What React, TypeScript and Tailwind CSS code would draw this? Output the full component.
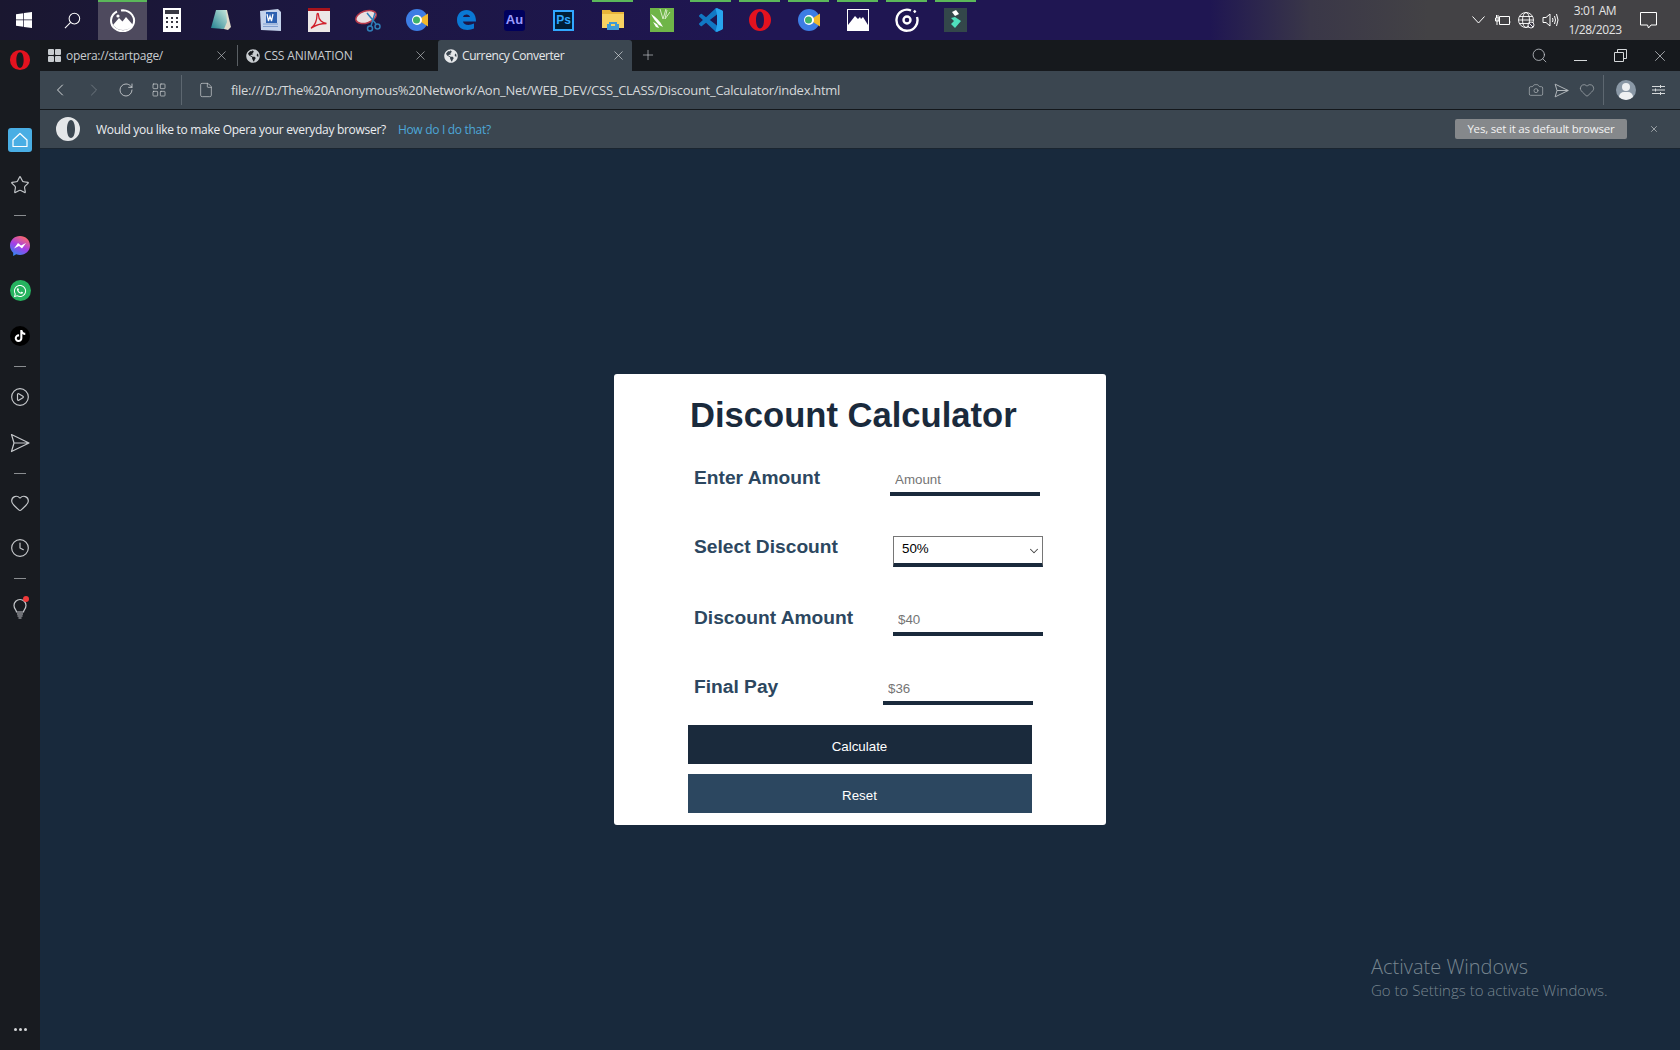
import { Camera, ChevronDown, ChevronLeft, ChevronRight, CirclePlay, Clock, File, Heart, LayoutGrid, Plus, RotateCw, Search, Star, X } from 'lucide-react';
import { FaGlobeAmericas, FaTiktok, FaWhatsapp } from 'react-icons/fa';
import type { ReactNode } from 'react';

const ui = "font-['Open_Sans',sans-serif]";
const form = "font-['Liberation_Sans',Arial,sans-serif]";

function Slot({ on, active, children }: { on?: boolean; active?: boolean; children: ReactNode }) {
    return (
        <div className={active ? 'relative h-10 w-[49px] flex items-center justify-center bg-[#4e4a5e]' : 'relative h-10 w-[49px] flex items-center justify-center'}>
            {on && <div className={active ? 'absolute top-0 inset-x-0 h-[2px] bg-[#5bb85a]' : 'absolute top-0 inset-x-[4px] h-[2px] bg-[#5bb85a]'} />}
            {children}
        </div>
    );
}

function Taskbar() {
    return (
        <div className="h-10 shrink-0 flex items-center bg-[linear-gradient(90deg,#1a1730_0%,#1c1742_20%,#1f1652_45%,#1f1652_72%,#3a3748_78%,#434245_85%,#434245_100%)]">
            <Slot>
                <svg className="mr-px" width="16" height="16" viewBox="0 0 16 16" fill="#fff"><path d="M0 2.3 7.3 1.2V7.6H0ZM8 1.1 16 0V7.6H8ZM0 8.3H7.3V14.8L0 13.7ZM8 8.3H16V16L8 14.9Z" /></svg>
            </Slot>
            <Slot>
                <svg className="mr-[2px]" width="17" height="17" viewBox="0 0 18 18" fill="none" stroke="#fff" strokeWidth="1.1"><circle cx="11" cy="7" r="5.6" /><path d="M7 11 1 17" /></svg>
            </Slot>
            <Slot on active>
                <svg width="26" height="24" viewBox="0 0 26 24" fill="none"><path d="M7 3.5A11.5 10.5 0 1 0 13 2.2a12 12 0 0 0-2 .2" stroke="#fff" strokeWidth="2" /><path d="M3 17 9 10l3.5 3.5L16 9l7 8q-3.5 5-10 5T3 17Z" fill="#fff" /><circle cx="8" cy="8" r="1.6" fill="#fff" /></svg>
            </Slot>
            <Slot>
                <svg width="18" height="24" viewBox="0 0 18 24"><rect width="18" height="24" fill="#fff" /><rect x="2" y="2" width="14" height="4" fill="#3a3a44" /><path d="M3 9h2v2H3zM8 9h2v2H8zM13 9h2v2h-2zM3 13h2v2H3zM8 13h2v2H8zM13 13h2v2h-2zM3 18h2v2H3zM8 18h2v2H8zM13 18h2v2h-2z" fill="#3a3a44" /></svg>
            </Slot>
            <Slot>
                <svg width="24" height="24" viewBox="0 0 24 24"><defs><linearGradient id="note" x1="0" y1="1" x2="1" y2="0"><stop offset="0" stopColor="#1f7f8f" /><stop offset="1" stopColor="#c8e8dc" /></linearGradient></defs><path d="M8 2h10l4 17-3 3-8-2Z" fill="#e0dccb" /><path d="M7 2h10l1 12-3 7-13-1Z" fill="url(#note)" /></svg>
            </Slot>
            <Slot>
                <svg width="24" height="24" viewBox="0 0 24 24"><path d="M2 3 20 1l3 3v19l-20-1Z" fill="#c4d3ec" /><path d="M8 4h11v11H8z" fill="#2b5fb0" /><path d="M9 6l1.5 7 1.5-5 1.5 5L15 6" stroke="#fff" strokeWidth="1.2" fill="none" /><path d="M5 16h15M5 18.500h15" stroke="#7f9ecf" /></svg>
            </Slot>
            <Slot>
                <svg width="22" height="24" viewBox="0 0 22 24"><rect width="22" height="24" fill="#ece7e6" /><rect width="22" height="3" fill="#a8141c" /><path d="M3 20c4-2 6-8 6-13 0-2 1.500-2 1.500 0 0 5 4 8 8 8.500-4 0-10 1-15 4.500Z" fill="none" stroke="#d0202c" strokeWidth="1.3" /></svg>
            </Slot>
            <Slot>
                <svg width="26" height="24" viewBox="0 0 26 24" fill="none"><ellipse cx="11" cy="9" rx="10.500" ry="6" transform="rotate(-18 11 9)" fill="#e9dfe0" stroke="#b8394a" strokeWidth="1.500" /><path d="M12 5l9 11M20 5 16 18" stroke="#2f7fb8" strokeWidth="1.500" /><circle cx="15" cy="20.500" r="2.500" stroke="#2f7fb8" strokeWidth="1.500" /><circle cx="22.500" cy="18.500" r="2.500" stroke="#2f7fb8" strokeWidth="1.500" /></svg>
            </Slot>
            <Slot>
                <ChromeIcon />
            </Slot>
            <Slot>
                <svg width="20" height="22" viewBox="0 0 20 22"><path d="M1 11C1 5 5 1 10.500 1 16 1 20 5 20 12.500H7c.5 3.500 6 4.500 11 2v5C12 22.500 1 21.500 1 11Zm6-3h7c-.3-3-6-3.500-7 0Z" fill="#0a78d4" /></svg>
            </Slot>
            <Slot>
                <div className={`w-[21px] h-[21px] rounded-[3px] bg-[#00005b] text-[#9a9aff] text-[13px] font-bold flex items-center justify-center ${form}`}>Au</div>
            </Slot>
            <Slot>
                <div className={`w-[21px] h-[21px] border-2 border-[#31a8ff] bg-[#001e36] text-[#31a8ff] text-[12px] font-bold flex items-center justify-center ${form}`}>Ps</div>
            </Slot>
            <Slot on>
                <svg width="22" height="20" viewBox="0 0 22 20"><path d="M0 0h8l2 2h12v4H0Z" fill="#e8b53a" /><path d="M0 4h22v14H0Z" fill="#f8d261" /><path d="M7 12h8v2h2v6H5v-6h2Z" fill="#3f9bd6" /><path d="M9 14h4v2H9z" fill="#f8d261" /></svg>
            </Slot>
            <Slot>
                <svg width="24" height="24" viewBox="0 0 24 24"><rect width="24" height="24" fill="#6fb548" /><path d="M1 6c5 3 9 7 12 13l-4-2C6 14 3 10 1 6Z" fill="#fff" /><path d="M3 14c3 1 5 3 6 6l-3-1Z" fill="#fff" /><path d="M10 1l3 10 3-10M17 2l-2 9 5-7" stroke="#d6ecc4" fill="none" /></svg>
            </Slot>
            <Slot on>
                <svg width="24" height="24" viewBox="0 0 24 24"><path d="M23.150 2.587 18.210.21a1.494 1.494 0 0 0-1.705.29l-9.460 8.630-4.120-3.128a.999.999 0 0 0-1.276.057L.327 7.261A1 1 0 0 0 .326 8.740L3.899 12 .326 15.260a1 1 0 0 0 .001 1.479L1.650 17.940a.999.999 0 0 0 1.276.057l4.120-3.128 9.460 8.630a1.492 1.492 0 0 0 1.704.29l4.942-2.377A1.500 1.500 0 0 0 24 20.060V3.939a1.500 1.500 0 0 0-.850-1.352zm-5.146 14.861L10.826 12l7.178-5.448v10.896z" fill="#1178c4" /><path d="M16.500.5 18.210.21l4.940 2.377A1.500 1.500 0 0 1 24 3.939V20.060a1.500 1.500 0 0 1-.850 1.352l-4.940 2.378-1.710-.290 1.504-6.052V6.552Z" fill="#28a4ee" /></svg>
            </Slot>
            <Slot on>
                <OperaLogo size={24} />
            </Slot>
            <Slot on>
                <ChromeIcon />
            </Slot>
            <Slot on>
                <svg width="22" height="22" viewBox="0 0 22 22"><rect x=".5" y=".5" width="21" height="21" fill="#1f1652" stroke="#fff" /><path d="M1 16 8 7l3 3 2-2 1 2 2-2 5 8v6H1Z" fill="#fff" /></svg>
            </Slot>
            <Slot on>
                <svg width="24" height="24" viewBox="0 0 24 24" fill="none"><path d="M16 2.500A10.500 10.500 0 1 0 22 9" stroke="#fff" strokeWidth="2.400" /><circle cx="12" cy="12" r="3.500" stroke="#fff" strokeWidth="2.400" /><path d="M19 2.500l1.500 2" stroke="#fff" strokeWidth="2.400" /></svg>
            </Slot>
            <Slot on>
                <svg width="23" height="24" viewBox="0 0 23 24"><rect width="23" height="24" fill="#33474a" /><path d="M8 4l4-2 3 4-4 2Z" fill="#fff" /><path d="M11 9l6 4-6 7-4-4 3-3-3-3Z" fill="#4fe0bd" /></svg>
            </Slot>
            <div className={`ml-auto flex items-center text-[#e4e4e4] ${ui}`}>
                <svg width="13" height="8" viewBox="0 0 13 8" fill="none" stroke="#fff"><path d="m.5.5 6 6.500 6-6.500" /></svg>
                <svg className="ml-[9px]" width="17" height="14" viewBox="0 0 17 14" fill="none" stroke="#fff"><path d="M5.500 3.500h10v8h-10zM15.500 6v3h1M1 7h4M2.500 2v3M4 2v3M1.500 5h3.500v3h-3.500zM3 8v4" /></svg>
                <svg className="ml-[7px]" width="17" height="17" viewBox="0 0 17 17" fill="none" stroke="#fff" strokeWidth=".9"><circle cx="8" cy="8" r="7.500" /><ellipse cx="8" cy="8" rx="3.500" ry="7.500" /><path d="M.5 8h15M1.500 4.500h13M1.500 11.500h13" /><circle cx="13" cy="13" r="3" fill="#3a3844" /><path d="m11 11 4 4" /></svg>
                <svg className="ml-[7px]" width="17" height="16" viewBox="0 0 17 16" fill="none" stroke="#fff"><path d="M1 5.500h3L8 2v12l-4-3.500H1ZM10.500 6q1 2 0 4M12.500 4q2 4 0 8M14.500 2q3 6 0 12" /></svg>
                <div className="ml-[6px] w-[60px] text-center text-[12px] leading-[19px] tracking-[-0.4px]">
                    <div>3:01 AM</div>
                    <div>1/28/2023</div>
                </div>
                <svg className="ml-[15px] mr-[23px]" width="17" height="17" viewBox="0 0 17 17" fill="none" stroke="#fff"><path d="M.5.5h16v12.500h-5.500L8.500 16l-1-3H.5Z" /></svg>
            </div>
        </div>
    );
}

function ChromeIcon() {
    return (
        <svg width="22" height="22" viewBox="0 0 22 22"><circle cx="11" cy="11" r="11" fill="#3d7de4" /><path d="M12 11 22 4.500v13Z" fill="#f2b92c" /><circle cx="11" cy="11" r="5" fill="#fff" /><circle cx="10.500" cy="11" r="3.500" fill="#3fb36b" /></svg>
    );
}

function OperaLogo({ size }: { size: number }) {
    return (
        <svg width={size} height={size} viewBox="0 0 24 24"><path fillRule="evenodd" d="M12 1a11 11 0 1 0 0 22 11 11 0 0 0 0-22Zm0 2.500c-2.500 0-4 3.800-4 8.500s1.500 8.500 4 8.500 4-3.800 4-8.500-1.500-8.500-4-8.500Z" fill="#e3121f" /></svg>
    );
}

function Sidebar() {
    return (
        <div className="w-10 shrink-0 bg-[#181b20] flex flex-col items-center text-[#c5c8cb]">
            <div className="mt-2 h-6 flex items-center"><OperaLogo size={22} /></div>
            <div className="mt-[56px] w-6 h-6 rounded-[3px] bg-[#49aee4] flex items-center justify-center">
                <svg width="16" height="16" viewBox="0 0 16 16" fill="none" stroke="#fff" strokeWidth="1.200"><path d="M8 1.500 15 8v6.500H1V8Z" strokeLinejoin="round" /></svg>
            </div>
            <Star className="mt-[23px]" size={20} strokeWidth={1.4} />
            <div className="mt-[20px] w-3 h-px bg-[#8a8d90]" />
            <svg className="mt-[20px]" width="20" height="20" viewBox="0 0 20 20"><defs><linearGradient id="msg" x1="0.7" y1="0" x2="0.2" y2="1"><stop offset="0" stopColor="#ff6a68" /><stop offset="0.5" stopColor="#a33ee8" /><stop offset="1" stopColor="#2a8bf2" /></linearGradient></defs><path d="M10 0C4.400 0 0 4.100 0 9.600c0 2.900 1.200 5.400 3.200 7.100V20l3-1.700c1.200.4 2.500.6 3.800.6 5.600 0 10-4 10-9.400S15.600 0 10 0Z" fill="url(#msg)" /><path d="m4 12.500 4-5.500 3 2.500L16 7l-4 5.500-3-2.500Z" fill="#fff" /></svg>
            <div className="mt-[24px] w-[21px] h-[21px] rounded-full bg-[#26b35f] flex items-center justify-center text-white"><FaWhatsapp size={14} /></div>
            <div className="mt-[25px] w-5 h-5 rounded-full bg-black flex items-center justify-center text-white"><FaTiktok size={12} /></div>
            <div className="mt-[20px] w-3 h-px bg-[#8a8d90]" />
            <CirclePlay className="mt-[20px]" size={20} strokeWidth={1.4} />
            <svg className="mt-[26px]" width="20" height="20" viewBox="0 0 20 20" fill="none" stroke="currentColor" strokeWidth="1.200"><path d="M1.500 1.500 19 10 1.500 18.500 4 10Z M4 10h15" strokeLinejoin="round" /></svg>
            <div className="mt-[20px] w-3 h-px bg-[#8a8d90]" />
            <Heart className="mt-[19px]" size={20} strokeWidth={1.4} />
            <Clock className="mt-[25px]" size={20} strokeWidth={1.4} />
            <div className="mt-[20px] w-3 h-px bg-[#8a8d90]" />
            <div className="relative mt-[19px]">
                <svg width="20" height="22" viewBox="0 0 20 22" fill="none" stroke="currentColor" strokeWidth="1.200"><path d="M6.500 14c0-2-2.500-3-2.500-6.500a6 6 0 0 1 12 0C16 11 13.500 12 13.500 14ZM7 16h6M7.500 18h5M8.500 20h3" /></svg>
                <div className="absolute -top-[2px] right-[1px] w-[6px] h-[6px] rounded-full bg-[#f03a3a]" />
            </div>
            <div className="mt-auto mb-[19px] flex gap-[2px]">
                <div className="w-[3px] h-[3px] rounded-full bg-[#d4d6d8]" />
                <div className="w-[3px] h-[3px] rounded-full bg-[#d4d6d8]" />
                <div className="w-[3px] h-[3px] rounded-full bg-[#d4d6d8]" />
            </div>
        </div>
    );
}

function TabBar() {
    return (
        <div className={`h-[31px] shrink-0 bg-[#16191d] flex text-[12px] tracking-[-0.3px] text-[#c8ccd0] ${ui}`}>
            <div className="w-[198px] pl-2 pr-[8px] flex items-center border-r border-[#5a5f64] my-[5px]">
                <div className="w-[13px] h-[13px] grid grid-cols-2 gap-px">
                    <div className="bg-[#c8ccd0] rounded-[1px]" />
                    <div className="bg-[#c8ccd0] rounded-[1px]" />
                    <div className="bg-[#c8ccd0] rounded-[1px]" />
                    <div className="bg-[#c8ccd0] rounded-[1px]" />
                </div>
                <span className="ml-[5px] pt-px">opera://startpage/</span>
                <X className="ml-auto" size={15} strokeWidth={1} />
            </div>
            <div className="w-[200px] pl-2 pr-[10px] flex items-center">
                <FaGlobeAmericas size={14} />
                <span className="ml-1 pt-px tracking-[-0.15px]">CSS ANIMATION</span>
                <X className="ml-auto" size={15} strokeWidth={1} />
            </div>
            <div className="w-[194px] pl-[6px] pr-[6px] flex items-center bg-[#3b4650] rounded-t-[3px] text-[#e6e8ea]">
                <FaGlobeAmericas size={14} />
                <span className="ml-1 pt-px tracking-[-0.4px]">Currency Converter</span>
                <X className="ml-auto" size={15} strokeWidth={1} />
            </div>
            <div className="ml-[8px] mb-px flex items-center"><Plus size={16} strokeWidth={1} /></div>
            <div className="ml-auto flex items-center">
                <Search size={17} strokeWidth={1.1} />
                <div className="ml-[26px] w-[13px] h-px bg-[#d5d8da] mt-[10px]" />
                <svg className="ml-[27px]" width="13" height="13" viewBox="0 0 13 13" fill="none" stroke="#d5d8da"><path d="M.5 3.500h9v9h-9zM3.500 3.500v-3h9v9h-3" /></svg>
                <X className="ml-[24px] mr-[11px]" size={18} strokeWidth={1} />
            </div>
        </div>
    );
}

function Toolbar() {
    return (
        <div className={`h-[39px] shrink-0 bg-[#3b4650] border-b border-[#14181c] flex items-center text-[#d5d8da] ${ui}`}>
            <ChevronLeft className="ml-[10px]" size={20} strokeWidth={1.2} />
            <ChevronRight className="ml-[14px] text-[#6d767e]" size={20} strokeWidth={1.2} />
            <RotateCw className="ml-[14px]" size={16} strokeWidth={1.2} />
            <LayoutGrid className="ml-[17px]" size={16} strokeWidth={1} />
            <div className="ml-[14px] w-px h-[30px] bg-[#5d6770]" />
            <File className="ml-[16px]" size={16} strokeWidth={1} />
            <span className="ml-[17px] pt-px text-[13px] tracking-[-0.28px]">file:///D:/The%20Anonymous%20Network/Aon_Net/WEB_DEV/CSS_CLASS/Discount_Calculator/index.html</span>
            <div className="ml-auto flex items-center text-[#b4b9bd]">
                <Camera size={16} strokeWidth={1} />
                <svg className="ml-[10px]" width="15" height="15" viewBox="0 0 20 20" fill="none" stroke="currentColor" strokeWidth="1.300"><path d="M1.500 1.500 19 10 1.500 18.500 4 10Z M4 10h15" /></svg>
                <Heart className="ml-[10px]" size={16} strokeWidth={1} />
                <div className="ml-[8px] w-px h-[30px] bg-[#5d6770]" />
                <div className="ml-[12px] relative w-5 h-5 rounded-full bg-[#8a98a6] overflow-hidden">
                    <div className="absolute left-[6px] top-[3px] w-2 h-2 rounded-full bg-[#eef0f2]" />
                    <div className="absolute left-[3px] top-[12px] w-[14px] h-[10px] rounded-full bg-[#eef0f2]" />
                </div>
                <svg className="ml-[16px] mr-[15px]" width="13" height="12" viewBox="0 0 13 12" fill="none" stroke="#d5d8da"><path d="M0 2.500h13M0 6h13M0 9.500h13M8.500 1v3M3.500 4.500v3M8.500 8v3" /></svg>
            </div>
        </div>
    );
}

function NotificationBar() {
    return (
        <div className={`h-[39px] shrink-0 bg-[#3b4650] border-b border-[#1a2530] flex items-center text-[12px] tracking-[-0.3px] ${ui}`}>
            <svg className="ml-[16px]" width="24" height="24" viewBox="0 0 24 24"><path fillRule="evenodd" d="M12 0a12 12 0 1 0 0 24 12 12 0 0 0 0-24Zm3 3c-2.500 0-4 4-4 9s1.500 9 4 9 4-4 4-9-1.500-9-4-9Z" fill="#e4e6e8" /></svg>
            <span className="ml-[16px] pt-px text-[#eceef0]">Would you like to make Opera your everyday browser?</span>
            <span className="ml-[12px] pt-px text-[#4da6d8]">How do I do that?</span>
            <button className="ml-auto w-[172px] h-5 rounded-[2px] bg-[#85888b] text-[#f2f2f2] text-[11.500px] tracking-[-0.2px]">Yes, set it as default browser</button>
            <X className="ml-[22px] mr-[21px] text-[#d5d8da]" size={10} strokeWidth={1.5} />
        </div>
    );
}

function CalcInput({ placeholder }: { placeholder: string }) {
    return (
        <input
            readOnly
            placeholder={placeholder}
            className="self-end w-[150px] h-[26px] pl-[5px] pb-[3px] border-b-4 border-[#1a2a3c] text-[13.330px] outline-none placeholder:text-[#757575]"
        />
    );
}

function Card() {
    return (
        <div className={`w-[492px] rounded-[3px] bg-white pb-3 ${form}`}>
            <h1 className="mt-[21px] ml-[76px] text-[34.600px] leading-[40px] font-bold text-[#1a2a3c]">Discount Calculator</h1>
            <div className="mt-[30px] ml-[80px] h-[31px] flex">
                <label className="w-[196px] pt-px text-[19.200px] leading-6 font-bold text-[#2c4760]">Enter Amount</label>
                <CalcInput placeholder="Amount" />
            </div>
            <div className="mt-[38px] ml-[80px] h-[33px] flex">
                <label className="w-[199px] pt-px text-[19.200px] leading-6 font-bold text-[#2c4760]">Select Discount</label>
                <div className="relative self-end">
                    <select defaultValue="50" className="block w-[150px] h-[31px] pl-2 pb-[2px] appearance-none rounded-none border border-[#767676] border-b-4 border-b-[#1a2a3c] text-[13.330px] text-black bg-white outline-none">
                        <option value="50">50%</option>
                    </select>
                    <ChevronDown className="absolute right-[2px] top-[8px] text-[#444]" size={14} strokeWidth={1.8} />
                </div>
            </div>
            <div className="mt-[38px] ml-[80px] h-[31px] flex">
                <label className="w-[199px] pt-px text-[19.200px] leading-6 font-bold text-[#2c4760]">Discount Amount</label>
                <CalcInput placeholder="$40" />
            </div>
            <div className="mt-[38px] ml-[80px] h-[31px] flex">
                <label className="w-[189px] pt-px text-[19.200px] leading-6 font-bold text-[#2c4760]">Final Pay</label>
                <CalcInput placeholder="$36" />
            </div>
            <button className="block mt-[20px] ml-[74px] w-[344px] h-[39px] pt-[4px] pr-px bg-[#1a2a3c] text-white text-[13.330px]">Calculate</button>
            <button className="block mt-[10px] ml-[74px] w-[344px] h-[39px] pt-[4px] pr-px bg-[#2c4760] text-white text-[13.330px]">Reset</button>
        </div>
    );
}

export default function App() {
    return (
        <div className="w-full h-screen flex flex-col overflow-hidden bg-[#18293c]">
            <Taskbar />
            <div className="flex-1 min-h-0 flex">
                <Sidebar />
                <div className="flex-1 min-w-0 flex flex-col">
                    <TabBar />
                    <Toolbar />
                    <NotificationBar />
                    <main className="relative flex-1 min-h-0 flex items-center justify-center">
                        <Card />
                        <div className={`absolute left-[1331px] top-[805px] text-[#77858f] font-light ${ui}`}>
                            <div className="text-[20px] leading-[26px]">Activate Windows</div>
                            <div className="text-[15px] leading-[20px]">Go to Settings to activate Windows.</div>
                        </div>
                    </main>
                </div>
            </div>
        </div>
    );
}
